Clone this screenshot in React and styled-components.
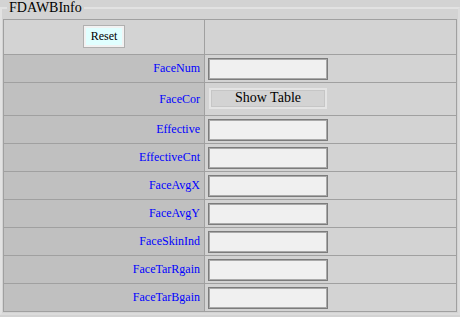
import React from "react";
import styled, { createGlobalStyle } from "styled-components";

const Global = createGlobalStyle`
  html, body {
    margin: 0;
    padding: 0;
    background: #d3d3d3;
    font-family: "Liberation Serif", "Times New Roman", serif;
  }
`;

const Fieldset = styled.fieldset`
  margin: 0;
  padding: 3px 1px 1px;
  width: 460px;
  box-sizing: border-box;
  border: 2px solid #e2e2e2;
  border-right-color: #dcdcdc;
  border-bottom-color: #dcdcdc;
  background: #d3d3d3;
`;

const Legend = styled.legend`
  margin-left: 4px;
  padding: 0 2px;
  font-size: 14px;
  line-height: 16px;
  color: #000;
`;

const Table = styled.div`
  display: grid;
  grid-template-columns: 200px 1fr;
  gap: 1px;
  background: #a0a0a0;
  border: 1px solid #a0a0a0;
`;

const Cell = styled.div`
  height: ${(p) => p.$h}px;
  display: flex;
  align-items: center;
  box-sizing: border-box;
`;

const LabelCell = styled(Cell)`
  justify-content: flex-end;
  padding-right: 4px;
  background: #c0c0c0;
  color: #0000ff;
  font-size: 12px;
`;

const HeaderCell = styled(Cell)`
  justify-content: center;
  background: #d3d3d3;
`;

const ValueCell = styled(Cell)`
  padding-left: 3px;
  background: #d3d3d3;
`;

const TextBox = styled.input`
  width: 120px;
  height: 22px;
  box-sizing: border-box;
  margin: 0;
  border: 1px solid #7c7c7c;
  box-shadow: inset 0 0 0 1px #a9a9a9;
  background: #f0f0f0;
  outline: none;
`;

const ShowButton = styled.button`
  width: 118px;
  height: 21px;
  margin: 0 0 2px 1px;
  box-sizing: border-box;
  padding: 0;
  border: 2px solid #e4e4e4;
  box-shadow: inset 0 0 0 1px #c6c6c6;
  background: #d3d3d3;
  font-family: "Liberation Serif", "Times New Roman", serif;
  font-size: 14px;
  color: #000;
`;

const ResetButton = styled.button`
  width: 42px;
  height: 23px;
  margin-bottom: 2px;
  box-sizing: border-box;
  padding: 0;
  border: 1px solid #b0b0b0;
  box-shadow: inset 0 0 0 2px #f2f2f2;
  background: #e0ffff;
  font-family: "Liberation Serif", "Times New Roman", serif;
  font-size: 12px;
  color: #000;
`;

const fields = [
  { name: "FaceNum", h: 27 },
  { name: "FaceCor", h: 32, button: true },
  { name: "Effective", h: 27 },
  { name: "EffectiveCnt", h: 27 },
  { name: "FaceAvgX", h: 27 },
  { name: "FaceAvgY", h: 27 },
  { name: "FaceSkinInd", h: 27 },
  { name: "FaceTarRgain", h: 27 },
  { name: "FaceTarBgain", h: 27 },
];

export default function App() {
  return (
    <>
      <Global />
      <Fieldset>
        <Legend>FDAWBInfo</Legend>
        <Table>
          <HeaderCell $h={34}>
            <ResetButton>Reset</ResetButton>
          </HeaderCell>
          <ValueCell $h={34} />
          {fields.map((f) => (
            <React.Fragment key={f.name}>
              <LabelCell $h={f.h}>{f.name}</LabelCell>
              <ValueCell $h={f.h}>
                {f.button ? <ShowButton>Show Table</ShowButton> : <TextBox type="text" />}
              </ValueCell>
            </React.Fragment>
          ))}
        </Table>
      </Fieldset>
    </>
  );
}
